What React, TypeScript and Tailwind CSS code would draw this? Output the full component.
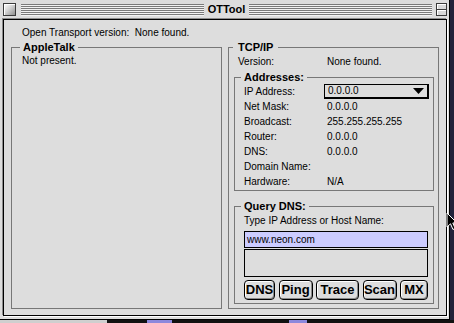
import type { ReactNode } from 'react';

// Classic Mac OS 8 "OTTool" window, platinum look

const addressRows: { label: string; value: string }[] = [
  { label: 'Net Mask:', value: '0.0.0.0' },
  { label: 'Broadcast:', value: '255.255.255.255' },
  { label: 'Router:', value: '0.0.0.0' },
  { label: 'DNS:', value: '0.0.0.0' },
  { label: 'Domain Name:', value: '' },
  { label: 'Hardware:', value: 'N/A' },
];

const buttons = ['DNS', 'Ping', 'Trace', 'Scan', 'MX'];
const buttonWidths: Record<string, string> = {
  DNS: 'w-[31px]',
  Ping: 'w-[34px]',
  Trace: 'w-[43px]',
  Scan: 'w-[34px]',
  MX: 'w-[28px]',
};

function Stripes() {
  return (
    <div className="flex-1 h-[12px] mt-[1px] bg-[repeating-linear-gradient(to_bottom,#7a7a7a_0px,#7a7a7a_1px,#f2f2f2_1px,#f2f2f2_2px)]" />
  );
}

function TitleBar() {
  return (
    <div className="flex items-start h-[19px] pt-[3px] pl-[3px] pr-[2px]">
      {/* close box */}
      <div className="w-[13px] h-[13px] border border-[#3a3a3a] bg-[linear-gradient(135deg,#ffffff_0%,#d4d4d4_45%,#8e8e8e_100%)] shadow-[inset_1px_1px_0_#ffffff]" />
      <div className="w-[5px]" />
      <Stripes />
      <div className="px-[4px] h-[13px] leading-[13px] text-[11px] font-bold">OTTool</div>
      <Stripes />
      {/* collapse box */}
      <div className="ml-[4px] w-[11px] h-[13px] border border-[#3a3a3a] bg-[#d8d8d8] flex flex-col">
        <div className="flex-1 border-b border-[#3a3a3a] shadow-[inset_1px_1px_0_#ffffff]" />
        <div className="flex-1 shadow-[inset_1px_1px_0_#ffffff]" />
      </div>
    </div>
  );
}

function Group({ title, legendClass, className, children }: {
  title: string;
  legendClass: string;
  className: string;
  children: ReactNode;
}) {
  return (
    <fieldset className={`border border-[#777777] ${className}`}>
      <legend className={`${legendClass} h-[14px] leading-[14px] text-[11px] font-bold`}>{title}</legend>
      {children}
    </fieldset>
  );
}

function Cursor() {
  return (
    <svg className="absolute left-[446px] top-[212px]" width="13" height="19" viewBox="0 0 13 19">
      <path
        d="M1 1 L1 15 L4.5 11.8 L7 17.5 L9.2 16.5 L6.8 11 L11 11 Z"
        fill="#000"
        stroke="#fff"
        strokeWidth="1"
      />
    </svg>
  );
}

export default function App() {
  return (
    <div className="relative w-[454px] h-[323px] overflow-hidden bg-[#22223a] font-['Liberation_Sans',Arial,sans-serif] text-[10px] text-black">
      <div className="flex flex-col w-[450px] h-[320px] bg-[#dddddd] border-r border-b border-black">
        <TitleBar />

        <div className="ml-[3px] mr-[2px] h-[297px] border border-black bg-[#dddddd] shadow-[-1px_-1px_0_#8c8c8c,1px_1px_0_#ffffff]">
          <div className="pl-[18px] pt-[6px] h-[20px] leading-[14px]">
            Open Transport version:{'\u00a0'} None found.
          </div>

          <div className="flex gap-[6px] px-[7px]">
            <Group title="AppleTalk" legendClass="ml-[8px] px-[3px]" className="w-[212px] h-[269px]">
              <div className="pl-[10px] h-[14px] leading-[14px]">Not present.</div>
            </Group>

            <Group title="TCP/IP" legendClass="ml-[4px] px-[5px]" className="w-[212px] h-[269px]">
              <div className="flex pl-[9px] h-[15px] leading-[15px]">
                <span className="w-[89px]">Version:</span>
                <span>None found.</span>
              </div>

              <Group title="Addresses:" legendClass="ml-[6px] px-[3px]" className="ml-[5px] mt-[1px] w-[200px]">
                <div className="pl-[9px] pb-[1px]">
                  <div className="flex items-center h-[15px]">
                    <span className="w-[80px] leading-[15px]">IP Address:</span>
                    <div className="flex items-center w-[105px] h-[15px] border-l border-t border-r-2 border-b-2 border-black">
                      <span className="flex-1 pl-[3px] leading-[12px]">0.0.0.0</span>
                      <svg className="mr-[3px]" width="11" height="6" viewBox="0 0 11 6">
                        <path d="M0 0 H11 L5.5 6 Z" fill="#000" />
                      </svg>
                    </div>
                  </div>
                  {addressRows.map((r) => (
                    <div key={r.label} className="flex h-[15px] leading-[15px]">
                      <span className="w-[80px]">{r.label}</span>
                      <span className="pl-[3px]">{r.value}</span>
                    </div>
                  ))}
                </div>
              </Group>

              <Group title="Query DNS:" legendClass="ml-[6px] px-[3px]" className="ml-[5px] mt-[8px] w-[200px]">
                <div className="pl-[9px] pr-[5px] pt-[1px] pb-[3px]">
                  <div className="h-[14px] leading-[14px]">Type IP Address or Host Name:</div>
                  <div className="mt-[3px] h-[17px] border border-black bg-[#ccccff] pl-[2px] leading-[15px]">
                    www.neon.com
                  </div>
                  <div className="mt-[1px] h-[28px] border border-black bg-[#dddddd]" />
                  <div className="mt-[3px] flex justify-between h-[20px]">
                    {buttons.map((b) => (
                      <div
                        key={b}
                        className={`${buttonWidths[b]} h-[20px] flex items-center justify-center rounded-[4px] border border-black bg-[#dddddd] shadow-[inset_1px_1px_0_#ffffff,inset_-1px_-1px_0_#8a8a8a] text-[13px] font-bold leading-[18px]`}
                      >
                        {b}
                      </div>
                    ))}
                  </div>
                </div>
              </Group>
            </Group>
          </div>
        </div>
      </div>

      {/* desktop peeking out below the window */}
      <div className="flex h-[3px]">
        <div className="w-[107px] bg-[#cfcfcf]" />
        <div className="w-[40px] bg-[#111111]" />
        <div className="w-[25px] bg-[#8c88dc]" />
        <div className="w-[117px] bg-[#111111]" />
        <div className="w-[18px] bg-[#8c88dc]" />
        <div className="flex-1 bg-[#111111]" />
      </div>

      <Cursor />
    </div>
  );
}
